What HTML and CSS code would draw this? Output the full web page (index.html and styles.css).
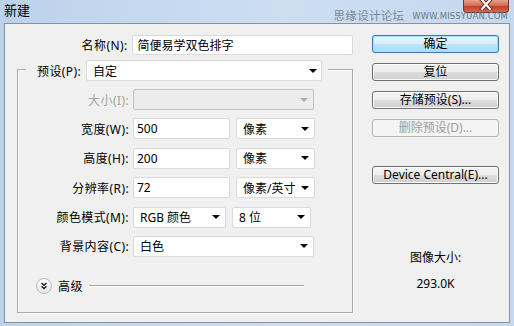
FILE: index.html
```html
<!DOCTYPE html>
<html lang="zh-CN">
<head>
    <meta charset="UTF-8">
    <title>新建</title>
    <link rel="stylesheet" href="styles.css">
</head>
<body>
    <div class="window">
        <div class="titlebar">
            <div class="title">新建</div>
            <div class="caption">
                <div class="close">
                    <svg width="14" height="10" viewBox="0 0 14 10">
                        <path d="M3 0 L11 9 M11 0 L3 9" stroke="#5a2018" stroke-width="4" stroke-linecap="square"/>
                        <path d="M3 0 L11 9 M11 0 L3 9" stroke="#fff" stroke-width="2.2" stroke-linecap="square"/>
                    </svg>
                </div>
                <div class="watermark">
                    <span class="wm-cn">思缘设计论坛</span>
                    <span class="wm-en">WWW.MISSYUAN.COM</span>
                </div>
            </div>
        </div>

        <div class="client">
            <div class="main">
                <div class="name-row">
                    <label class="lbl top-lbl">名称(N):</label>
                    <input class="field name-field" type="text" value="简便易学双色排字">
                </div>

                <div class="group">
                    <div class="legend">
                        <span class="lbl">预设(P):</span>
                        <div class="select preset"><span>自定</span><i class="arrow"></i></div>
                    </div>

                    <div class="rows">
                        <div class="row">
                            <span class="lbl dim">大小(I):</span>
                            <div class="select disabled full"><span></span><i class="arrow"></i></div>
                        </div>
                        <div class="row">
                            <span class="lbl">宽度(W):</span>
                            <input class="field num" type="text" value="500">
                            <div class="select unit"><span>像素</span><i class="arrow"></i></div>
                        </div>
                        <div class="row">
                            <span class="lbl">高度(H):</span>
                            <input class="field num" type="text" value="200">
                            <div class="select unit"><span>像素</span><i class="arrow"></i></div>
                        </div>
                        <div class="row">
                            <span class="lbl">分辨率(R):</span>
                            <input class="field num" type="text" value="72">
                            <div class="select unit"><span>像素/英寸</span><i class="arrow"></i></div>
                        </div>
                        <div class="row">
                            <span class="lbl">颜色模式(M):</span>
                            <div class="select mode"><span>RGB 颜色</span><i class="arrow"></i></div>
                            <div class="select unit"><span>8 位</span><i class="arrow"></i></div>
                        </div>
                        <div class="row">
                            <span class="lbl">背景内容(C):</span>
                            <div class="select full"><span>白色</span><i class="arrow"></i></div>
                        </div>
                    </div>

                    <div class="advanced">
                        <svg class="adv-icon" width="16" height="16" viewBox="0 0 16 16">
                            <defs>
                                <linearGradient id="advBg" x1="0" y1="0" x2="0" y2="1">
                                    <stop offset="0" stop-color="#ffffff"/>
                                    <stop offset="1" stop-color="#e4e4e4"/>
                                </linearGradient>
                            </defs>
                            <circle cx="8" cy="8" r="7.5" fill="url(#advBg)" stroke="#b9b9b9"/>
                            <path d="M5.5 5 L8 7.3 L10.5 5 M5.5 8.3 L8 10.6 L10.5 8.3" fill="none" stroke="#222" stroke-width="1.4"/>
                        </svg>
                        <span class="adv-text">高级</span>
                        <span class="adv-line"></span>
                    </div>
                </div>
            </div>

            <div class="side">
                <button class="btn default">确定</button>
                <button class="btn">复位</button>
                <button class="btn">存储预设(S)...</button>
                <button class="btn" disabled>删除预设(D)...</button>
                <button class="btn device">Device Central(E)...</button>

                <div class="info">
                    <div class="info-title">图像大小:</div>
                    <div class="info-value">293.0K</div>
                </div>
            </div>
        </div>
    </div>
</body>
</html>
```

FILE: styles.css
```css
body {
    margin: 0;
    font-family: "Noto Sans", "Noto Sans CJK SC", sans-serif;
    font-size: 12px;
    color: #000;
}
.window {
    width: 514px;
    height: 326px;
    display: flex;
    flex-direction: column;
    background: linear-gradient(to right, #bcd2eb, #cddef1 55%, #c4d8ee);
}

/* title bar */
.titlebar {
    height: 23px;
    display: flex;
    justify-content: space-between;
    padding-left: 4px;
}
.title {
    font-family: "Noto Sans CJK SC", sans-serif;
    font-size: 13px;
    line-height: 20px;
}
.caption {
    display: flex;
    flex-direction: column;
    align-items: flex-end;
    padding-right: 5px;
}
.close {
    width: 46px;
    height: 13px;
    box-sizing: border-box;
    border: 1px solid #7b3226;
    border-top: none;
    border-radius: 0 0 4px 4px;
    background: linear-gradient(#e9a18e, #d3654d 50%, #c0412b 55%, #d06a4f);
    display: flex;
    justify-content: center;
}
.watermark {
    display: flex;
    align-items: flex-end;
    gap: 8px;
    margin-top: -4px;
    padding-right: 1px;
    color: #7a8594;
    line-height: 12px;
}
.wm-cn {
    font-family: "Noto Sans CJK SC", sans-serif;
    font-size: 11.5px;
    letter-spacing: 0.3px;
}
.wm-en {
    font-family: "DejaVu Sans", sans-serif;
    font-size: 8.4px;
    letter-spacing: 0.2px;
    line-height: 10px;
    color: #6c7886;
}

/* client area */
.client {
    flex: 1;
    margin: 0 4px 3px 4px;
    border: 1px solid #8492a2;
    background: #f0f0f0;
    display: flex;
}
.main {
    width: 348px;
}
.lbl {
    text-align: right;
    white-space: nowrap;
    letter-spacing: 0.4px;
}
.dim {
    color: #a3a3a3;
}
.name-row {
    display: flex;
    align-items: center;
    gap: 4px;
    margin-top: 11px;
}
.top-lbl {
    width: 124px;
}
.field {
    box-sizing: border-box;
    height: 21px;
    border: 1px solid #dadada;
    border-radius: 2px;
    background: #fff;
    font: inherit;
    color: #000;
    padding: 0 3px;
    outline: none;
}
.name-field {
    width: 224px;
    height: 20px;
    padding-left: 5px;
}
.num {
    width: 97px;
}

/* selects */
.select {
    box-sizing: border-box;
    height: 21px;
    border: 1px solid #dadada;
    border-radius: 2px;
    background: #fff;
    display: flex;
    align-items: center;
    justify-content: space-between;
    padding: 0 5px 0 6px;
    white-space: nowrap;
}
.arrow {
    width: 0;
    height: 0;
    border-left: 4px solid transparent;
    border-right: 4px solid transparent;
    border-top: 4px solid #000;
}
.select.disabled {
    background: #ececec;
    border-color: #c2c2c2;
}
.select.disabled .arrow {
    border-top-color: #a9a9a9;
}
.preset {
    width: 236px;
    padding-right: 4px;
}
.full {
    width: 181px;
}
.unit {
    width: 79px;
}
.mode {
    width: 93px;
}

/* preset group box */
.group {
    box-sizing: border-box;
    width: 336px;
    margin: 14px 0 0 12px;
    border: 1px solid #a8a8a8;
    box-shadow: 1px 1px 0 #fff, inset 1px 1px 0 #fff;
    padding-bottom: 17px;
}
.legend {
    display: flex;
    align-items: center;
    gap: 5px;
    width: max-content;
    margin: -10px 0 0 8px;
    padding: 0 6px 0 11px;
    background: #f0f0f0;
}
.rows {
    display: flex;
    flex-direction: column;
    gap: 8.4px;
    margin-top: 8px;
}
.row {
    display: flex;
    align-items: center;
    gap: 6px;
}
.row .lbl {
    width: 111px;
    margin-right: -2px;
}
.advanced {
    display: flex;
    align-items: center;
    gap: 6px;
    margin: 20px 48px 0 18px;
}
.adv-icon {
    display: block;
}
.adv-text {
    font-size: 12px;
    letter-spacing: 0.4px;
}
.adv-line {
    flex: 1;
    height: 1px;
    background: #a6a6a6;
    box-shadow: 0 1px 0 #fff;
}

/* buttons */
.side {
    width: 127px;
    margin-left: 19px;
    padding-top: 11px;
    display: flex;
    flex-direction: column;
}
.btn {
    box-sizing: border-box;
    height: 18px;
    margin-bottom: 10px;
    border: 1px solid #707070;
    border-radius: 3px;
    background: linear-gradient(#f4f4f4, #ececec 48%, #dddddd 52%, #cfcfcf);
    box-shadow: inset 0 0 0 1px #fbfbfb;
    font: inherit;
    color: #000;
    padding: 0;
    line-height: 14px;
}
.btn.default {
    border-color: #3c7fb1;
    background: linear-gradient(#e8f6fd, #d8effb 48%, #bee6fd 52%, #a9dbf6);
    box-shadow: inset 0 0 0 1px #a5dcf7, 0 0 1px #6fbfe9;
}
.btn:disabled {
    border-color: #b5b5b5;
    background: #f4f4f4;
    box-shadow: none;
    color: #9c9c9c;
}
.btn.device {
    margin-top: 19px;
}
.info {
    margin-top: 56px;
    text-align: center;
    line-height: 16px;
}
.info-value {
    margin-top: 10px;
}
```
